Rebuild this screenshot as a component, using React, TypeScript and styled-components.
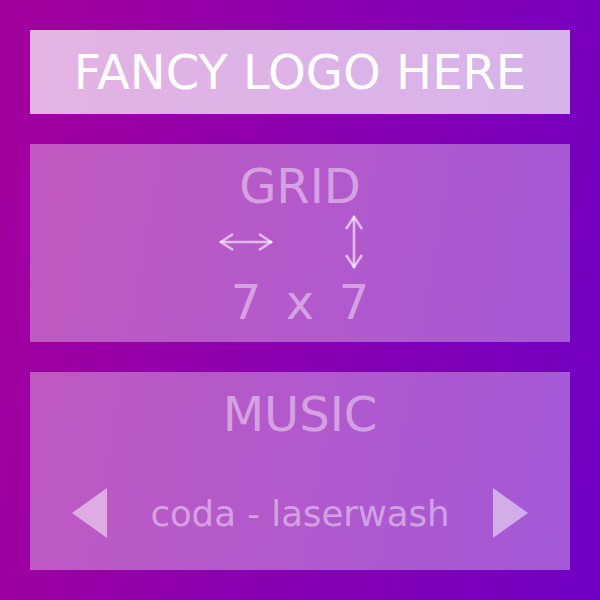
import React from "react";
import styled, { createGlobalStyle } from "styled-components";

const GlobalStyle = createGlobalStyle`
  html, body { margin: 0; padding: 0; }
  body { font-family: "DejaVu Sans", "Liberation Sans", sans-serif; }
`;

const Page = styled.div`
  width: 600px;
  height: 600px;
  box-sizing: border-box;
  padding: 30px;
  display: flex;
  flex-direction: column;
  gap: 30px;
  background: linear-gradient(100deg, #a4009c 0%, #7000c4 100%);
  font-family: "DejaVu Sans", "Liberation Sans", sans-serif;
`;

const LogoBar = styled.div`
  height: 84px;
  display: flex;
  align-items: center;
  justify-content: center;
  background: rgba(255, 255, 255, 0.7);
  color: #ffffff;
  font-size: 48px;
  line-height: 56px;
`;

const Panel = styled.div`
  height: 198px;
  box-sizing: border-box;
  padding-top: 14px;
  display: flex;
  flex-direction: column;
  align-items: center;
  background: rgba(255, 255, 255, 0.35);
  color: rgba(255, 255, 255, 0.45);
`;

const Title = styled.div`
  font-size: 48px;
  line-height: 56px;
`;

const SizeGrid = styled.div`
  display: grid;
  grid-template-columns: repeat(3, 54px);
  grid-template-rows: 56px 56px;
  row-gap: 4px;
  justify-items: center;
  align-items: center;
`;

const Num = styled.div`
  font-size: 48px;
  line-height: 56px;
`;

const ArrowSvg = styled.svg`
  display: block;
  stroke: rgba(255, 255, 255, 0.6);
  stroke-width: 2.6;
  fill: none;
`;

const Player = styled.div`
  align-self: stretch;
  margin-top: 46px;
  padding: 0 42px;
  height: 50px;
  display: flex;
  align-items: center;
  justify-content: space-between;
`;

const Track = styled.div`
  font-size: 35.5px;
  line-height: 42px;
  padding-top: 2px;
`;

const NavTriangle = styled.svg`
  display: block;
  fill: rgba(255, 255, 255, 0.5);
`;

const HArrow = () => (
  <ArrowSvg width="54" height="20" viewBox="0 0 54 20">
    <line x1="1" y1="10" x2="53" y2="10" />
    <polyline points="14,2 2,10 14,18" />
    <polyline points="40,2 52,10 40,18" />
  </ArrowSvg>
);

const VArrow = () => (
  <ArrowSvg width="20" height="54" viewBox="0 0 20 54">
    <line x1="10" y1="1" x2="10" y2="53" />
    <polyline points="2,14 10,2 18,14" />
    <polyline points="2,40 10,52 18,40" />
  </ArrowSvg>
);

export default function App() {
  return (
    <>
      <GlobalStyle />
      <Page>
        <LogoBar>FANCY LOGO HERE</LogoBar>
        <Panel>
          <Title>GRID</Title>
          <SizeGrid>
            <HArrow />
            <span />
            <VArrow />
            <Num>7</Num>
            <Num>x</Num>
            <Num>7</Num>
          </SizeGrid>
        </Panel>
        <Panel>
          <Title>MUSIC</Title>
          <Player>
            <NavTriangle width="35" height="50" viewBox="0 0 35 50">
              <polygon points="35,0 0,25 35,50" />
            </NavTriangle>
            <Track>coda - laserwash</Track>
            <NavTriangle width="35" height="50" viewBox="0 0 35 50">
              <polygon points="0,0 35,25 0,50" />
            </NavTriangle>
          </Player>
        </Panel>
      </Page>
    </>
  );
}
